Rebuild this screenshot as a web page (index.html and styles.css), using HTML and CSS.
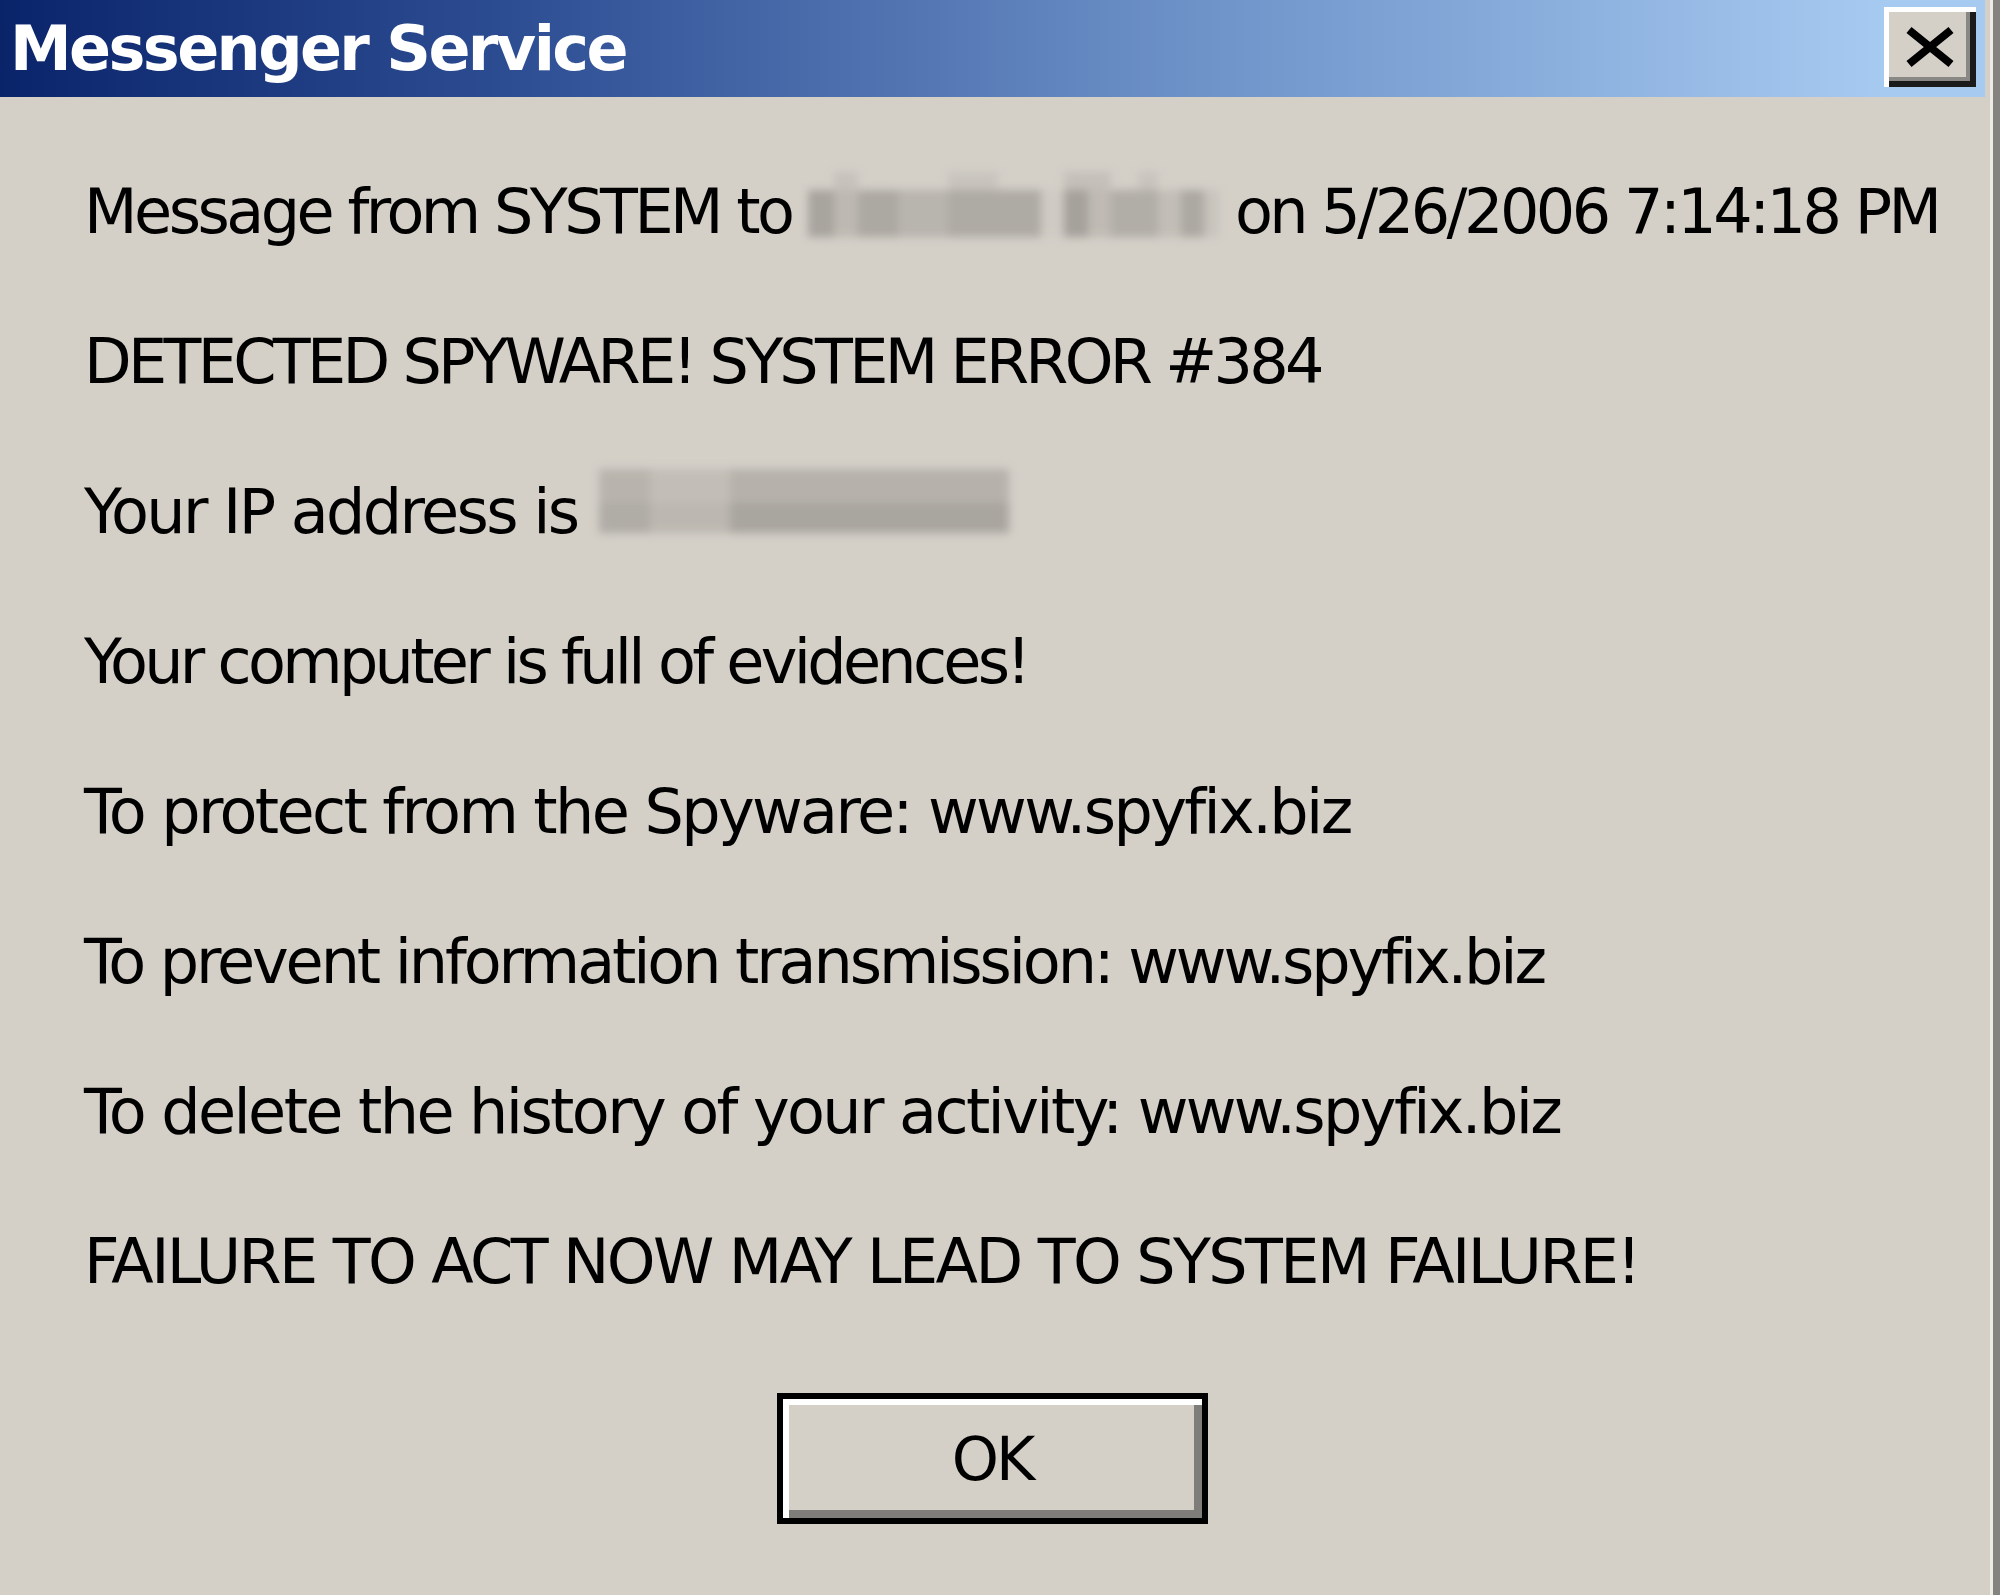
FILE: index.html
```html
<!DOCTYPE html>
<html>
<head>
  <meta charset="UTF-8">
  <title>Messenger Service</title>
  <link rel="stylesheet" href="styles.css">
</head>
<body>
  <div class="window">
    <div class="titlebar">
      <span class="title">Messenger Service</span>
      <button class="close" type="button" aria-label="Close">
        <svg width="52" height="42" viewBox="0 0 52 42">
          <path d="M5 4 L47 38 M47 4 L5 38" stroke="#000" stroke-width="8" fill="none"/>
        </svg>
      </button>
    </div>

    <div class="content">
      <p class="line line-first">Message from SYSTEM to <span class="redact redact-name"></span> on 5/26/2006 7:14:18 PM</p>
      <p class="line line-tight">DETECTED SPYWARE! SYSTEM ERROR #384</p>
      <p class="line">Your IP address is <span class="redact redact-ip"></span></p>
      <p class="line line-tight">Your computer is full of evidences!</p>
      <p class="line">To protect from the Spyware: www.spyfix.biz</p>
      <p class="line line-mid">To prevent information transmission: www.spyfix.biz</p>
      <p class="line">To delete the history of your activity: www.spyfix.biz</p>
      <p class="line">FAILURE TO ACT NOW MAY LEAD TO SYSTEM FAILURE!</p>

      <div class="actions">
        <button class="ok" type="button">OK</button>
      </div>
    </div>
  </div>
</body>
</html>
```

FILE: styles.css
```css
html, body {
  margin: 0;
  padding: 0;
}

body {
  width: 2000px;
  height: 1595px;
  overflow: hidden;
  background-color: #d4d0c8;
  font-family: "DejaVu Sans", Verdana, sans-serif;
}

.window {
  height: 1595px;
  background-color: #d4d0c8;
  border-right: 7px solid #858380;
  box-shadow: inset -3px 0 0 #ecebe6;
  box-sizing: border-box;
}

/* Title bar */
.titlebar {
  height: 97px;
  margin-right: 8px;
  display: flex;
  align-items: flex-start;
  justify-content: space-between;
  background: linear-gradient(90deg, #0a246a 0%, #2c4c92 25%, #6d92c8 60%, #a6caf0 95%);
}

.title {
  padding-left: 10px;
  color: #fff;
  font-weight: bold;
  font-size: 62px;
  line-height: 97px;
  letter-spacing: -2.6px;
}

.close {
  width: 92px;
  height: 80px;
  margin: 7px 9px 0 0;
  padding: 0;
  display: flex;
  align-items: center;
  justify-content: center;
  background-color: #d4d0c8;
  border: none;
  box-shadow: inset 5px 5px 0 #fff, inset -6px -6px 0 #1b1b1b, inset -10px -10px 0 #8a8884;
}

/* Message */
.content {
  padding: 40px 0 0 84px;
}

.line {
  margin: 0;
  height: 150px;
  line-height: 150px;
  font-size: 62px;
  letter-spacing: -2.6px;
  color: #000;
  white-space: nowrap;
}

.line-first {
  letter-spacing: -3.5px;
}

.line-tight {
  letter-spacing: -3.7px;
}

.line-mid {
  letter-spacing: -3.1px;
}

.redact {
  display: inline-block;
  background-repeat: no-repeat;
  filter: blur(4px);
}

/* blurred user name */
.redact-name {
  width: 411px;
  height: 70px;
  margin-left: 0;
  vertical-align: -9px;
  background-image:
    linear-gradient(90deg,
      transparent 0, transparent 26px,
      #c6c2bb 26px, #c6c2bb 50px,
      transparent 50px, transparent 140px,
      #c8c4bd 140px, #c8c4bd 190px,
      transparent 190px, transparent 256px,
      #c4c0b9 256px, #c4c0b9 303px,
      transparent 303px, transparent 330px,
      #c8c4bd 330px, #c8c4bd 350px,
      transparent 350px),
    linear-gradient(90deg,
      #a8a49e 0, #a8a49e 26px,
      #bdb9b2 26px, #bdb9b2 50px,
      #aca8a2 50px, #aca8a2 90px,
      #b8b4ae 90px, #b8b4ae 140px,
      #aeaaa4 140px, #aeaaa4 233px,
      #cfcbc4 233px, #cfcbc4 256px,
      #a5a19b 256px, #a5a19b 280px,
      #bfbbb4 280px, #bfbbb4 303px,
      #b1ada7 303px, #b1ada7 350px,
      #c2beb7 350px, #c2beb7 373px,
      #aca8a2 373px, #aca8a2 396px,
      #c8c4bd 396px);
  background-size: 100% 18px, 100% 47px;
  background-position: 0 0, 0 18px;
}

/* blurred IP address */
.redact-ip {
  width: 410px;
  height: 64px;
  margin-left: 4px;
  vertical-align: 0;
  background-image:
    linear-gradient(90deg,
      #b8b4ad 0, #b8b4ad 51px,
      #c2beb7 51px, #c2beb7 131px,
      #b6b2ab 131px),
    linear-gradient(90deg,
      #b0aca6 0, #b0aca6 51px,
      #bcb8b1 51px, #bcb8b1 131px,
      #a9a59f 131px);
  background-size: 100% 34px, 100% 30px;
  background-position: 0 0, 0 34px;
}

.actions {
  display: flex;
  justify-content: center;
  padding-right: 93px;
  margin-top: 56px;
}

.ok {
  width: 431px;
  height: 131px;
  padding: 0;
  background-color: #d4d0c8;
  border: 6px solid #000;
  box-shadow: inset 6px 6px 0 #fff, inset -8px -8px 0 #7f7d79;
  font-family: "DejaVu Sans", Verdana, sans-serif;
  font-size: 60px;
  letter-spacing: -3px;
  color: #000;
}
```
